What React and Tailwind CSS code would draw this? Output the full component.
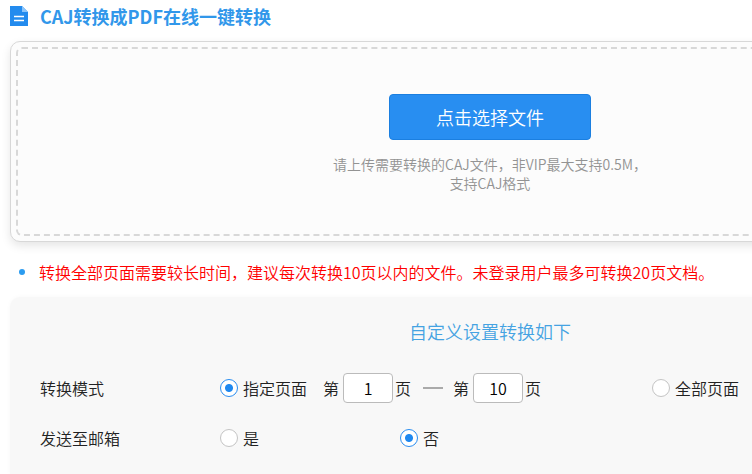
const font = "font-['Noto_Sans_CJK_SC','Noto_Sans',sans-serif]";

function Radio({ id, name, label, defaultChecked }) {
  return (
    <span className="flex items-center gap-[5px]">
      <input
        type="radio"
        id={id}
        name={name}
        defaultChecked={defaultChecked}
        className="size-[18px] shrink-0 appearance-none rounded-full border border-[#c4c4c4] bg-white checked:border-[#2a8df0] checked:bg-[radial-gradient(circle,#1e88f0_3.5px,#fff_4.5px)]"
      />
      <label htmlFor={id}>{label}</label>
    </span>
  );
}

function PageField({ label, defaultValue }) {
  return (
    <span className="flex items-center">
      <span className="mr-1">第</span>
      <input
        type="text"
        aria-label={label}
        defaultValue={defaultValue}
        className="h-[30px] w-[50px] rounded border border-[#bbb] bg-white text-center text-base text-black"
      />
      <span className="ml-[2px]">页</span>
    </span>
  );
}

export default function App() {
  return (
    <div className={`min-h-screen overflow-hidden bg-white font-[350] ${font}`}>
      <main className="min-w-[980px] px-[10px] pt-1">
        <h1 className="flex h-6 items-center gap-3 text-lg leading-6 font-bold text-[#3197ea]">
          <svg className="h-5 w-[18px] shrink-0" viewBox="0 0 18 20" aria-hidden="true">
            <path d="M0 0h12l6 6v14H0z" fill="#238bee" />
            <path d="M12 0v6h6z" fill="#8cc5fa" />
            <path d="M4 10.5h10M4 14.5h10" stroke="#fff" strokeWidth="1.5" />
          </svg>
          CAJ转换成PDF在线一键转换
        </h1>

        <section className="mt-[13px] rounded-[10px] border border-[#d8d8d8] bg-[#fcfcfc] p-[5px] shadow-[0_4px_10px_rgba(0,0,0,0.1)]">
          <div className="flex flex-col items-center rounded-md border-2 border-dashed border-[#d8d8d8] pt-[45px] pb-[41px]">
            <button
              type="button"
              className="h-[46px] w-[202px] rounded border border-[#1b7fe0] bg-[#288ef1] text-lg text-white"
            >
              点击选择文件
            </button>
            <p className="mt-[15px] text-center text-sm leading-[19px] text-[#939393]">
              请上传需要转换的CAJ文件，非VIP最大支持0.5M，
              <br />
              支持CAJ格式
            </p>
          </div>
        </section>

        <ul className="mt-[18px] pl-[9px]">
          <li className="flex items-center gap-[14px] text-base leading-6 text-[#f00]">
            <span className="size-[6px] rounded-full bg-[#2b9cf0]" />
            转换全部页面需要较长时间，建议每次转换10页以内的文件。未登录用户最多可转换20页文档。
          </li>
        </ul>

        <section className="mt-[13px] rounded-t-[10px] bg-[#f8f8f8] px-[30px] pt-[22px] pb-3 text-base text-[#222] shadow-[0_0_5px_#f8f8f8]">
          <h2 className="text-center text-lg leading-6 text-[#45a3e2]">自定义设置转换如下</h2>
          <div role="radiogroup" aria-label="转换模式" className="mt-5 flex h-[50px] items-center">
            <span className="w-[180px]">转换模式</span>
            <div className="flex w-[432px] items-center">
              <Radio id="mode-range" name="mode" label="指定页面" defaultChecked />
              <div className="ml-4 flex items-center">
                <PageField label="起始页" defaultValue="1" />
                <span className="mr-[10px] ml-3 h-[2px] w-5 bg-[#aaa]" />
                <PageField label="结束页" defaultValue="10" />
              </div>
            </div>
            <Radio id="mode-all" name="mode" label="全部页面" />
          </div>
          <div role="radiogroup" aria-label="发送至邮箱" className="flex h-[50px] items-center">
            <span className="w-[180px]">发送至邮箱</span>
            <div className="w-[180px]">
              <Radio id="mail-yes" name="mail" label="是" />
            </div>
            <Radio id="mail-no" name="mail" label="否" defaultChecked />
          </div>
        </section>
      </main>
    </div>
  );
}
